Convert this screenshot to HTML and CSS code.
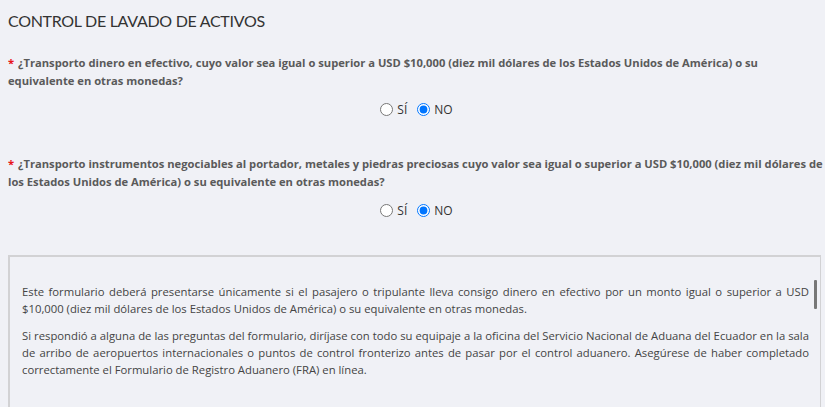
FILE: index.html
```html
<!DOCTYPE html>
<html lang="es">
<head>
<meta charset="utf-8">
<link rel="stylesheet" href="styles.css">
</head>
<body>
<div class="page">
  <h2 class="title">CONTROL DE LAVADO DE ACTIVOS</h2>
  <div class="question">
    <p class="q-text"><span class="req">*</span>¿Transporto dinero en efectivo, cuyo valor sea igual o superior a USD $10,000 (diez mil dólares de los Estados Unidos de América) o su equivalente en otras monedas?</p>
    <div class="options">
      <label class="opt"><input type="radio" name="q1"> SÍ</label>
      <label class="opt"><input type="radio" name="q1" checked> NO</label>
    </div>
  </div>
  <div class="question">
    <p class="q-text"><span class="req">*</span>¿Transporto instrumentos negociables al portador, metales y piedras preciosas cuyo valor sea igual o superior a USD $10,000 (diez mil dólares de los Estados Unidos de América) o su equivalente en otras monedas?</p>
    <div class="options">
      <label class="opt"><input type="radio" name="q2"> SÍ</label>
      <label class="opt"><input type="radio" name="q2" checked> NO</label>
    </div>
  </div>
  <div class="info">
    <div class="info-inner">
      <p>Este formulario deberá presentarse únicamente si el pasajero o tripulante lleva consigo dinero en efectivo por un monto igual o superior a USD $10,000 (diez mil dólares de los Estados Unidos de América) o su equivalente en otras monedas.</p>
      <p>Si respondió a alguna de las preguntas del formulario, diríjase con todo su equipaje a la oficina del Servicio Nacional de Aduana del Ecuador en la sala de arribo de aeropuertos internacionales o puntos de control fronterizo antes de pasar por el control aduanero. Asegúrese de haber completado correctamente el Formulario de Registro Aduanero (FRA) en línea.</p>
    </div>
    <div class="scroll-thumb"></div>
  </div>
</div>
</body>
</html>
```
FILE: styles.css
```css
html, body {
  margin: 0;
  padding: 0;
  background: #f0f1f6;
  overflow: hidden;
}
.page {
  padding: 0 0 0 8px;
  font-family: "Open Sans", "Liberation Sans", sans-serif;
  color: #555;
}
.title {
  margin: 0;
  padding-top: 11px;
  font-family: Lato, "Open Sans", sans-serif;
  font-weight: 400;
  font-size: 16px;
  line-height: 20px;
  color: #333;
  letter-spacing: -0.3px;
}
.question {
  margin-top: 23px;
}
.question + .question {
  margin-top: 37px;
}
.q-text {
  margin: 0;
  font-size: 11.2px;
  font-weight: 700;
  line-height: 18px;
  color: #5a5a5a;
}
.req {
  color: #e8151b;
  margin-right: 4px;
}
.options {
  display: flex;
  justify-content: center;
  gap: 10px;
  margin-top: 11px;
  font-size: 12px;
  color: #333;
}
.opt {
  display: flex;
  align-items: center;
  gap: 4px;
}
.opt input {
  margin: 0;
  width: 13px;
  height: 13px;
}
.info {
  position: relative;
  margin-top: 36px;
  margin-right: 4px;
  border-top: 2px solid #d2d2d4;
  border-left: 2px solid #d2d2d4;
  border-right: 1px solid #d2d2d4;
  height: 160px;
}
.info-inner {
  padding: 26px 11px 0 12px;
  font-size: 11.3px;
  line-height: 17px;
  color: #444;
  text-align: justify;
}
.info-inner p {
  margin: 0 0 10px;
}
.scroll-thumb {
  position: absolute;
  right: 3px;
  top: 23px;
  width: 3px;
  height: 29px;
  background: #777;
  border-radius: 1px;
}
```
